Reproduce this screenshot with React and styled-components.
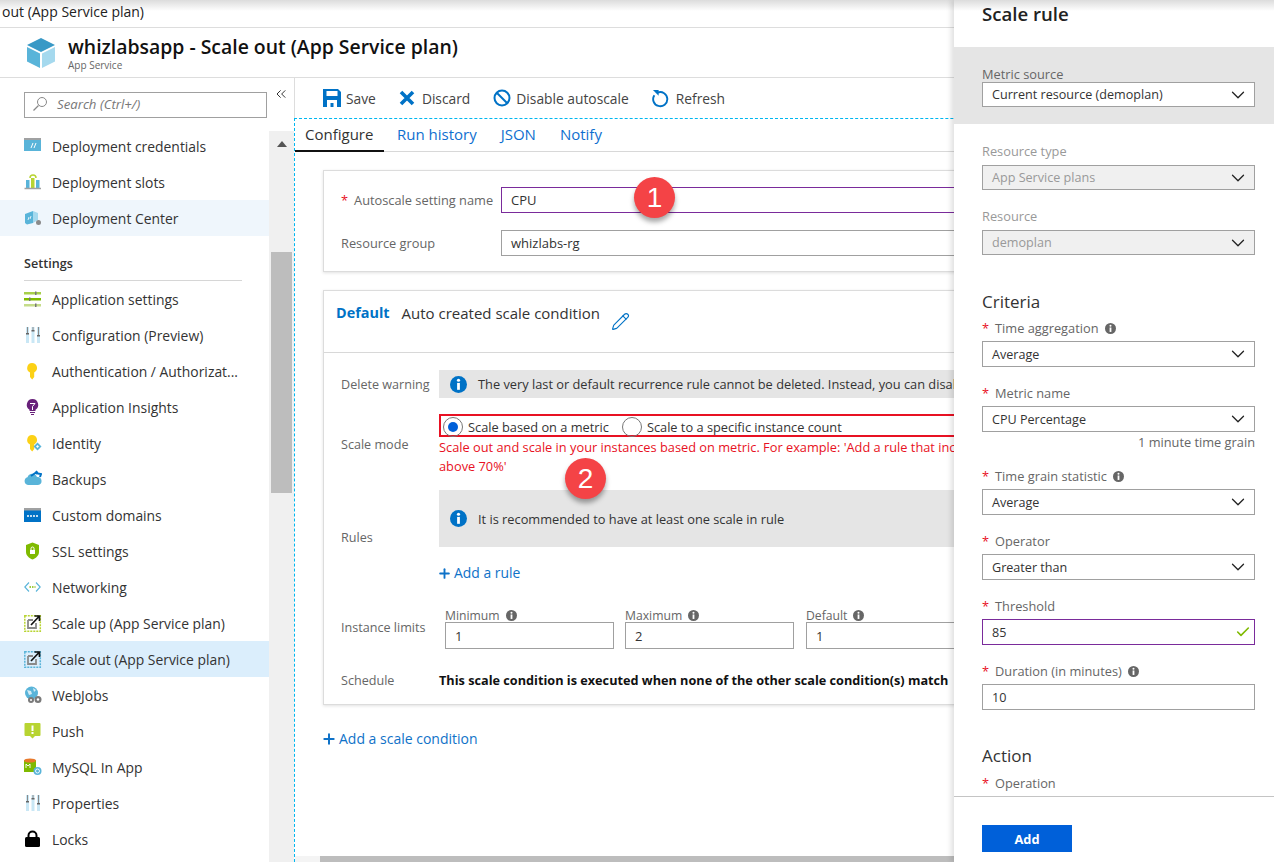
import React from "react";
import styled, { createGlobalStyle } from "styled-components";
import { ChevronDown, ChevronsLeft, Pencil, Plus, Check } from "lucide-react";

const GlobalStyle = createGlobalStyle`
    html, body {
        margin: 0;
        padding: 0;
        overflow: hidden;
        background: #fff;
    }
    * {
        box-sizing: border-box;
    }
`

const Page = styled.div`
    position: relative;
    width: 1274px;
    height: 862px;
    overflow: hidden;
    display: flex;
    flex-direction: column;
    font-family: "Open Sans", "Noto Sans", sans-serif;
    color: #333;
    background: #fff;
`

const Breadcrumb = styled.div`
    height: 28px;
    flex: none;
    padding-left: 2px;
    font-size: 14px;
    line-height: 23px;
    color: #222;
    border-bottom: 1px solid #ddd;
    background: linear-gradient(#dcdcdc 0, #fff 11px);
`

const Header = styled.header`
    height: 50px;
    flex: none;
    display: flex;
    align-items: center;
    gap: 12px;
    padding-left: 26px;
    border-bottom: 1px solid #ddd;
`

const HeaderText = styled.div`
    display: flex;
    flex-direction: column;
`

const Title = styled.h1`
    margin: -1px 0 0;
    font-size: 19.4px;
    line-height: 25px;
    font-weight: 600;
    color: #111;
    white-space: nowrap;
`

const Subtitle = styled.span`
    font-size: 10px;
    line-height: 12px;
    color: #666;
`

const Body = styled.div`
    flex: 1;
    display: flex;
    min-height: 0;
`

const Sidebar = styled.aside`
    width: 294px;
    flex: none;
    display: flex;
    flex-direction: column;
`

const SearchRow = styled.div`
    height: 50px;
    flex: none;
    display: flex;
    align-items: flex-start;
    padding: 14px 0 0 24px;
    gap: 6px;
`

const SearchBox = styled.div`
    width: 243px;
    height: 26px;
    display: flex;
    align-items: center;
    gap: 9px;
    padding: 0 0 2px 7px;
    border: 1px solid #a0a0a0;
    font-size: 13.2px;
    font-style: italic;
    color: #777;
`

const Collapse = styled.span`
    display: flex;
    color: #333;
    margin-top: -6px;
`

const SideBody = styled.div`
    flex: 1;
    display: flex;
    min-height: 0;
`

const NavColumn = styled.nav`
    width: 269px;
    flex: none;
    overflow: hidden;
`

const NavItem = styled.div`
    height: 36px;
    display: flex;
    align-items: center;
    gap: 10px;
    padding-left: 24px;
    font-size: 13.9px;
    color: #333;
    white-space: nowrap;
    background: ${(props) => props.$bg || "transparent"};
`

const NavHeading = styled.div`
    height: 45px;
    margin: 0 27px 0 24px;
    padding-top: 18px;
    font-size: 12.6px;
    font-weight: 600;
    line-height: 20px;
    color: #333;
    border-bottom: 1px solid #d6d6d6;
`

const Track = styled.div`
    width: 25px;
    flex: none;
    margin-top: 3px;
    background: #f0f0f0;
    display: flex;
    flex-direction: column;
    align-items: center;
`

const TrackArrow = styled.div`
    margin-top: 10px;
    width: 0;
    height: 0;
    border-left: 5.5px solid transparent;
    border-right: 5.5px solid transparent;
    border-bottom: 6px solid #555;
`

const TrackThumb = styled.div`
    margin-top: 105px;
    width: 21px;
    height: 241px;
    background: #bdbdbd;
`

const Main = styled.main`
    flex: 1;
    min-width: 0;
    display: flex;
    flex-direction: column;
`

const Toolbar = styled.div`
    height: 40px;
    flex: none;
    display: flex;
    align-items: center;
    padding-left: 28px;
    gap: 23px;
    border-left: 1px solid #ddd;
    font-size: 13.8px;
    color: #444;
`

const ToolButton = styled.span`
    display: flex;
    align-items: center;
    gap: ${(props) => props.$gap || 5}px;
    white-space: nowrap;
`

const Workspace = styled.div`
    flex: 1;
    min-height: 0;
    display: flex;
    flex-direction: column;
    border-left: 1px dashed #00b7f0;
    border-top: 1px dashed #00b7f0;
`

const Tabs = styled.div`
    height: 33px;
    flex: none;
    display: flex;
    border-bottom: 1px solid #d8d8d8;
    font-size: 15px;
`

const Tab = styled.span`
    height: 33px;
    padding: 5px ${(props) => props.$pad || 12}px 0;
    margin-right: ${(props) => (props.$active ? 1 : 0)}px;
    color: ${(props) => (props.$active ? "#333" : "#0f6fd0")};
    border-bottom: 2px solid ${(props) => (props.$active ? "#111" : "transparent")};
    width: ${(props) => props.$width}px;
    white-space: nowrap;
`

const Content = styled.div`
    flex: 1;
    min-height: 0;
    overflow: hidden;
    padding: 18px 0 0 28px;
`

const Card = styled.section`
    width: 1000px;
    margin-bottom: 18px;
    background: #fff;
    border: 1px solid #dcdcdc;
    box-shadow: 0 1px 3px rgba(0, 0, 0, 0.12);
`

const NameBlock = styled.div`
    padding: 16px 0 15px 17px;
    display: flex;
    flex-direction: column;
    gap: 17px;
`

const NameRow = styled.div`
    display: flex;
    align-items: center;
`

const NameLabel = styled.label`
    width: 160px;
    flex: none;
    font-size: 12.8px;
    color: #666;
    white-space: nowrap;
`

const Star = styled.span`
    color: #e81123;
    margin-right: ${(props) => props.$gap || 6}px;
`

const Input = styled.div`
    width: ${(props) => props.$width || "100%"};
    height: ${(props) => props.$height || 26}px;
    display: flex;
    align-items: center;
    justify-content: space-between;
    padding: 0 ${(props) => props.$right || 5}px 0 9px;
    border: 1px solid ${(props) => props.$border || "#a0a0a0"};
    background: ${(props) => props.$bg || "#fff"};
    color: ${(props) => props.$color || "#333"};
    font-size: 13px;
    white-space: nowrap;
`

const PanelInput = styled(Input)`
    font-size: 12.6px;
`

const CardHead = styled.div`
    height: 62px;
    display: flex;
    align-items: flex-start;
    padding: 11px 0 0 12px;
    border-bottom: 1px solid #d8d8d8;
    font-size: 15px;
    line-height: 22px;
`

const DefaultTag = styled.strong`
    color: #0072c6;
    font-size: 14.4px;
    font-weight: 700;
    margin-right: 12px;
`

const CondName = styled.span`
    color: #333;
    margin-right: 11px;
`

const PencilWrap = styled.span`
    display: flex;
    color: #0072c6;
    margin-top: 10px;
`

const CardBody = styled.div`
    padding: 17px 0 15px 17px;
`

const FormRow = styled.div`
    display: flex;
    align-items: center;
    margin-top: ${(props) => props.$top || 0}px;
`

const RowLabel = styled.span`
    width: 98px;
    flex: none;
    margin-bottom: ${(props) => props.$lift || 0}px;
    font-size: 12.6px;
    color: #666;
    white-space: nowrap;
`

const RowMain = styled.div`
    flex: 1;
    min-width: 0;
`

const Notice = styled.div`
    height: ${(props) => props.$height}px;
    display: flex;
    align-items: center;
    gap: 11px;
    padding-left: 11px;
    background: #e5e5e5;
    font-size: 12.8px;
    color: #333;
    white-space: nowrap;
`

const ModeBox = styled.div`
    height: 23px;
    display: flex;
    align-items: center;
    padding: 2px 0 0 2px;
    border: 2px solid #e81123;
    font-size: 12.8px;
    color: #333;
    white-space: nowrap;
`

const Radio = styled.span`
    width: 20px;
    height: 20px;
    flex: none;
    border-radius: 50%;
    border: 1px solid #777;
    display: flex;
    align-items: center;
    justify-content: center;
    margin-left: ${(props) => props.$left || 0}px;
    margin-right: 5px;
    &::after {
        content: "";
        width: 10px;
        height: 10px;
        border-radius: 50%;
        background: ${(props) => (props.$on ? "#0060d9" : "transparent")};
    }
`

const ModeHelp = styled.p`
    margin: 0;
    padding-top: 1px;
    font-size: 12.8px;
    line-height: 18.5px;
    color: #e81123;
    white-space: nowrap;
`

const AddLink = styled.div`
    display: flex;
    align-items: center;
    gap: 2px;
    margin-top: ${(props) => props.$top || 0}px;
    font-size: ${(props) => props.$size || 13.9}px;
    line-height: 22px;
    color: #0f72c8;
    white-space: nowrap;
    svg {
        margin-left: -2px;
    }
`

const Limits = styled.div`
    display: grid;
    grid-template-columns: 180px 181px 169px;
    padding-left: 6px;
`

const LimitLabel = styled.div`
    height: 14px;
    display: flex;
    align-items: center;
    gap: 6px;
    font-size: 12.2px;
    color: #666;
`

const ScheduleText = styled.strong`
    font-size: 12.7px;
    font-weight: 700;
    color: #111;
    white-space: nowrap;
`

const HScroll = styled.div`
    height: 6px;
    flex: none;
    padding-left: 25px;
    background: #f4f4f4;
`

const HThumb = styled.div`
    height: 100%;
    background: #bdbdbd;
`

const Badge = styled.div`
    position: absolute;
    left: ${(props) => props.$x}px;
    top: ${(props) => props.$y}px;
    width: 41px;
    height: 41px;
    border-radius: 50%;
    background: #f44346;
    color: #fff;
    display: flex;
    align-items: center;
    justify-content: center;
    font-family: "Liberation Sans", Arial, sans-serif;
    font-size: 28px;
    box-shadow: 0 4px 5px rgba(0, 0, 0, 0.35);
`

const Panel = styled.aside`
    position: absolute;
    right: 0;
    top: 0;
    bottom: 0;
    width: 320px;
    display: flex;
    flex-direction: column;
    background: linear-gradient(#dcdcdc 0, #fff 11px);
    box-shadow: -3px 0 5px rgba(0, 0, 0, 0.12);
`

const PanelTitle = styled.h2`
    height: 47px;
    flex: none;
    margin: 0;
    padding-left: 28px;
    font-size: 18.6px;
    line-height: 28px;
    font-weight: 600;
    color: #222;
`

const SourceBand = styled.div`
    flex: none;
    height: 77px;
    padding: 19px 19px 0 28px;
    background: #e5e5e5;
`

const PanelScroll = styled.div`
    flex: 1;
    min-height: 0;
    overflow: hidden;
    padding: 18px 19px 0 28px;
`

const Field = styled.div`
    margin-bottom: ${(props) => props.$after ?? 17}px;
`

const FieldLabel = styled.div`
    height: ${(props) => props.$height || 18}px;
    margin-bottom: ${(props) => props.$gap ?? 4}px;
    display: flex;
    align-items: center;
    font-size: 12.8px;
    color: ${(props) => props.$color || "#666"};
    white-space: nowrap;
`

const InfoSlot = styled.span`
    display: flex;
    margin-left: 6px;
`

const Hint = styled.div`
    height: 17px;
    margin-top: 1px;
    text-align: right;
    font-size: 12.8px;
    line-height: 18px;
    color: #666;
`

const SectionTitle = styled.h3`
    margin: ${(props) => props.$top}px 0 ${(props) => props.$bottom}px;
    font-size: 17px;
    line-height: 24px;
    font-weight: 400;
    color: #333;
`

const PanelFooter = styled.div`
    height: 66px;
    flex: none;
    padding: 28px 0 0 28px;
    border-top: 1px solid #c4c4c4;
    background: #fff;
`

const AddButton = styled.button`
    width: 90px;
    height: 27px;
    border: 0;
    padding: 0;
    background: #0060d9;
    color: #fff;
    font-family: inherit;
    font-size: 12.8px;
    font-weight: 700;
`

const IconSvg = styled.svg`
    width: 18px;
    height: 18px;
    flex: none;
    display: block;
`

const Sliders = () => (
    <IconSvg viewBox="0 0 18 18">
        <rect x="2" y="1" width="3" height="16" fill="#c9e7f5" />
        <rect x="7.500" y="1" width="3" height="16" fill="#c9e7f5" />
        <rect x="13" y="1" width="3" height="16" fill="#c9e7f5" />
        <path d="M3.500 1v7M9 1v3M14.500 1v9" stroke="#8a8a8a" strokeWidth="1" />
        <rect x="2" y="7" width="3" height="1.500" fill="#666" />
        <rect x="7.500" y="4" width="3" height="1.500" fill="#666" />
        <rect x="13" y="9" width="3" height="1.500" fill="#666" />
    </IconSvg>
)

const KeyShape = ({ fill }) => (
    <path
        d="M8 1a5 5 0 0 1 2.200 9.500V15l-2 2.400L6 15v-4.500A5 5 0 0 1 8 1z"
        fill={fill}
    />
)

const ScaleIcon = ({ color }) => (
    <IconSvg viewBox="0 0 18 18">
        <rect x="0.800" y="1.800" width="15.500" height="15.500" fill="none" stroke={color} strokeWidth="1.500" strokeDasharray="2 1" />
        <path d="M4 6h5M4 6v8h8v-5" fill="none" stroke="#8a8a8a" strokeWidth="1.800" />
        <path d="M7 11L15 2.500M10.500 2h5v5" fill="none" stroke="#111" strokeWidth="1.700" />
    </IconSvg>
)

const navIcons = {
    credentials: (
        <IconSvg viewBox="0 0 18 18">
            <rect x="0" y="1" width="17" height="13" fill="#59b4d9" />
            <rect x="0" y="1" width="17" height="2" fill="#a0a1a2" />
            <path d="M7 11l2-5M10 11l2-5" stroke="#fff" strokeWidth="1" />
        </IconSvg>
    ),
    slots: (
        <IconSvg viewBox="0 0 18 18">
            <path d="M6 5a3 3 0 0 1 6 0" fill="none" stroke="#b8d432" strokeWidth="1.500" />
            <rect x="2" y="7" width="3.500" height="8" fill="#59b4d9" />
            <rect x="7" y="5" width="3.500" height="10" fill="#b8d432" />
            <rect x="12" y="7" width="3.500" height="8" fill="#59b4d9" />
            <path d="M0.500 15.500h16.500" stroke="#a0a1a2" strokeWidth="1.500" />
        </IconSvg>
    ),
    center: (
        <IconSvg viewBox="0 0 18 18">
            <path d="M1 5l8-3v12l-6 1.500-2-1.500z" fill="#59b4d9" />
            <path d="M9 2l5 2v7l-5 3z" fill="#a5d9ee" />
            <path d="M5 8l-1 3M7 7l-1 3" stroke="#fff" strokeWidth="0.800" />
            <circle cx="14.500" cy="13.500" r="2.500" fill="#8a8a8a" />
        </IconSvg>
    ),
    appSettings: (
        <IconSvg viewBox="0 0 18 18">
            <rect x="0" y="2" width="17" height="2.500" fill="#a7cf4b" />
            <rect x="0" y="8" width="17" height="2.500" fill="#7fba00" />
            <rect x="0" y="14" width="17" height="2.500" fill="#c5dc8a" />
            <rect x="11" y="1.500" width="1.500" height="3.500" fill="#777" />
            <rect x="5" y="7.500" width="1.500" height="3.500" fill="#777" />
            <rect x="11" y="13.500" width="1.500" height="3.500" fill="#777" />
        </IconSvg>
    ),
    config: <Sliders />,
    auth: (
        <IconSvg viewBox="0 0 18 18">
            <KeyShape fill="#fcd116" />
        </IconSvg>
    ),
    insights: (
        <IconSvg viewBox="0 0 18 18">
            <path d="M8.500 1a5.800 5.800 0 0 1 3 10.700V13h-6v-1.300A5.800 5.800 0 0 1 8.500 1z" fill="#68217a" />
            <path d="M6 5.500h5L8.500 8.500V12" fill="none" stroke="#fff" strokeWidth="1" />
            <path d="M6 14.500h5M7 16.500h3" stroke="#68217a" strokeWidth="1.200" />
        </IconSvg>
    ),
    identity: (
        <IconSvg viewBox="0 0 18 18">
            <KeyShape fill="#fcd116" />
            <path d="M13.500 8.500l4 4-4 4-4-4z" fill="#59b4d9" />
            <path d="M13.500 11l1.500 1.500-1.500 1.500-1.500-1.500z" fill="#fff" />
        </IconSvg>
    ),
    backups: (
        <IconSvg viewBox="0 0 18 18">
            <path d="M4 15a4 4 0 0 1-.500-7.800A5 5 0 0 1 13 7a4 4 0 0 1 1 8z" fill="#59b4d9" />
            <path d="M7 6l5-3.500 1.500 1.500M12 1l2 2.500 3 0.500-1 3" fill="none" stroke="#0072c6" strokeWidth="2" />
        </IconSvg>
    ),
    domains: (
        <IconSvg viewBox="0 0 18 18">
            <rect x="0" y="2" width="17" height="14" fill="#0072c6" />
            <rect x="0" y="2" width="17" height="2.500" fill="#a0a1a2" />
            <path d="M3 10h11" stroke="#fff" strokeWidth="1.500" strokeDasharray="2 1" />
        </IconSvg>
    ),
    ssl: (
        <IconSvg viewBox="0 0 18 18">
            <path d="M8.500 0.500l6.500 2.500v7c0 3.500-3 6-6.500 7.500C5 16 2 13.500 2 10V3z" fill="#7fba00" />
            <rect x="6" y="8" width="5" height="4" fill="#fff" />
            <path d="M7 8V6.500a1.500 1.500 0 0 1 3 0V8" fill="none" stroke="#fff" strokeWidth="1" />
        </IconSvg>
    ),
    networking: (
        <IconSvg viewBox="0 0 18 18">
            <path d="M5 4.500L0.800 9 5 13.500M12 4.500L16.200 9 12 13.500" fill="none" stroke="#59b4d9" strokeWidth="1.100" />
            <path d="M5.500 9h6" stroke="#7fba00" strokeWidth="1.500" strokeDasharray="1.500 1" />
        </IconSvg>
    ),
    scaleUp: <ScaleIcon color="#b8d432" />,
    scaleOut: <ScaleIcon color="#59b4d9" />,
    webjobs: (
        <IconSvg viewBox="0 0 18 18">
            <circle cx="7.500" cy="7" r="6.500" fill="#59b4d9" />
            <path d="M3 4l4 1 1 3-3 1zM9 2l3 2-2 2z" fill="#fff" opacity="0.750" />
            <circle cx="7" cy="14" r="3" fill="#7a7a7a" />
            <circle cx="14" cy="13.500" r="3.500" fill="#7a7a7a" />
            <circle cx="7" cy="14" r="1" fill="#fff" />
            <circle cx="14" cy="13.500" r="1.200" fill="#fff" />
        </IconSvg>
    ),
    push: (
        <IconSvg viewBox="0 0 18 18">
            <path d="M1.500 1h14a1 1 0 0 1 1 1v11a1 1 0 0 1-1 1H11l-2.500 2.500L6 14H1.500a1 1 0 0 1-1-1V2a1 1 0 0 1 1-1z" fill="#b8d432" />
            <path d="M8.500 3.500v5.500" stroke="#fff" strokeWidth="2" />
            <rect x="7.500" y="10" width="2" height="2" fill="#fff" />
        </IconSvg>
    ),
    mysql: (
        <IconSvg viewBox="0 0 18 18">
            <rect x="0" y="2" width="12" height="12" fill="#7fba00" />
            <ellipse cx="6" cy="2.500" rx="6" ry="2" fill="#e8792b" />
            <path d="M2 10V6l2 2 2-2v4" fill="none" stroke="#fff" strokeWidth="0.900" />
            <circle cx="13.500" cy="13" r="4" fill="#59b4d9" />
            <circle cx="13.500" cy="13" r="2" fill="none" stroke="#fff" strokeWidth="0.900" />
        </IconSvg>
    ),
    properties: <Sliders />,
    locks: (
        <IconSvg viewBox="0 0 18 18">
            <path d="M4.500 8V5.500a4 4 0 0 1 8 0V8" fill="none" stroke="#000" strokeWidth="2" />
            <rect x="1" y="7" width="15" height="10" rx="1.500" fill="#000" />
        </IconSvg>
    ),
}

const topNav = [
    { icon: "credentials", label: "Deployment credentials" },
    { icon: "slots", label: "Deployment slots" },
    { icon: "center", label: "Deployment Center", bg: "#eff6fc" },
]

const settingsNav = [
    { icon: "appSettings", label: "Application settings" },
    { icon: "config", label: "Configuration (Preview)" },
    { icon: "auth", label: "Authentication / Authorizat..." },
    { icon: "insights", label: "Application Insights" },
    { icon: "identity", label: "Identity" },
    { icon: "backups", label: "Backups" },
    { icon: "domains", label: "Custom domains" },
    { icon: "ssl", label: "SSL settings" },
    { icon: "networking", label: "Networking" },
    { icon: "scaleUp", label: "Scale up (App Service plan)" },
    { icon: "scaleOut", label: "Scale out (App Service plan)", bg: "#dbeefc" },
    { icon: "webjobs", label: "WebJobs" },
    { icon: "push", label: "Push" },
    { icon: "mysql", label: "MySQL In App" },
    { icon: "properties", label: "Properties" },
    { icon: "locks", label: "Locks" },
]

const Info = ({ size = 11, color = "#666" }) => (
    <svg width={size} height={size} viewBox="0 0 16 16" style={{ display: "block", flex: "none" }}>
        <circle cx="8" cy="8" r="8" fill={color} />
        <circle cx="8" cy="4" r="1.500" fill="#fff" />
        <rect x="6.700" y="6.500" width="2.600" height="6.500" fill="#fff" />
    </svg>
)

const CubeLogo = () => (
    <svg width="30" height="32" viewBox="0 0 30 32" style={{ display: "block", flex: "none" }}>
        <path d="M15 1l14 7-14 7L1 8z" fill="#3999c6" />
        <path d="M1 10l13 6.500V31L1 24.500z" fill="#59b4d9" />
        <path d="M29 10l-13 6.500V31l13-6.500z" fill="#a5d9ee" />
    </svg>
)

const SearchGlyph = () => (
    <svg width="16" height="16" viewBox="0 0 16 16" style={{ display: "block", flex: "none" }}>
        <circle cx="10" cy="6" r="4.500" fill="none" stroke="#888" strokeWidth="1" />
        <path d="M6.500 9.500L1.500 14.500" stroke="#888" strokeWidth="1.300" />
    </svg>
)

const SaveGlyph = () => (
    <svg width="18" height="18" viewBox="0 0 18 18" style={{ display: "block" }}>
        <path d="M0 0h15l3 3v15H0z" fill="#0072c6" />
        <rect x="3.500" y="2" width="11" height="5" fill="#fff" />
        <rect x="4" y="11" width="10" height="7" fill="#fff" />
        <rect x="7.500" y="14" width="3" height="4" fill="#0072c6" />
    </svg>
)

const DiscardGlyph = () => (
    <svg width="16" height="16" viewBox="0 0 16 16" style={{ display: "block" }}>
        <path d="M2 2l12 12M14 2L2 14" stroke="#0072c6" strokeWidth="3.600" />
    </svg>
)

const DisableGlyph = () => (
    <svg width="18" height="18" viewBox="0 0 18 18" style={{ display: "block" }}>
        <circle cx="9" cy="9" r="7.500" fill="none" stroke="#0072c6" strokeWidth="2" />
        <path d="M4 4l10 10" stroke="#0072c6" strokeWidth="2" />
    </svg>
)

const RefreshGlyph = () => (
    <svg width="17" height="20" viewBox="0 0 18 20" style={{ display: "block" }}>
        <path d="M6 4.200A7.500 7.500 0 1 1 2.500 7" fill="none" stroke="#0072c6" strokeWidth="2" />
        <path d="M1 1.500h6v6z" fill="#0072c6" />
    </svg>
)

const Required = ({ children, info }) => (
    <FieldLabel>
        <Star $gap={6}>*</Star>
        {children}
        {info && (
            <InfoSlot>
                <Info />
            </InfoSlot>
        )}
    </FieldLabel>
)

const Select = ({ value, disabled, height }) => (
    <PanelInput
        $height={height}
        $bg={disabled ? "#f0f0f0" : "#fff"}
        $color={disabled ? "#999" : "#333"}
    >
        {value}
        <ChevronDown size={22} strokeWidth={1.4} color="#222" />
    </PanelInput>
)

const NavList = ({ items }) =>
    items.map((item) => (
        <NavItem key={item.label} $bg={item.bg}>
            {navIcons[item.icon]}
            {item.label}
        </NavItem>
    ))

const App = () => {
    return (
        <Page>
            <GlobalStyle />
            <Breadcrumb>out (App Service plan)</Breadcrumb>
            <Header>
                <CubeLogo />
                <HeaderText>
                    <Title>whizlabsapp - Scale out (App Service plan)</Title>
                    <Subtitle>App Service</Subtitle>
                </HeaderText>
            </Header>
            <Body>
                <Sidebar>
                    <SearchRow>
                        <SearchBox>
                            <SearchGlyph />
                            Search (Ctrl+/)
                        </SearchBox>
                        <Collapse>
                            <ChevronsLeft size={16} strokeWidth={1.5} />
                        </Collapse>
                    </SearchRow>
                    <SideBody>
                        <NavColumn>
                            <NavList items={topNav} />
                            <NavHeading>Settings</NavHeading>
                            <NavList items={settingsNav} />
                        </NavColumn>
                        <Track>
                            <TrackArrow />
                            <TrackThumb />
                        </Track>
                    </SideBody>
                </Sidebar>
                <Main>
                    <Toolbar>
                        <ToolButton><SaveGlyph />Save</ToolButton>
                        <ToolButton $gap={7}><DiscardGlyph />Discard</ToolButton>
                        <ToolButton><DisableGlyph />Disable autoscale</ToolButton>
                        <ToolButton $gap={7}><RefreshGlyph />Refresh</ToolButton>
                    </Toolbar>
                    <Workspace>
                        <Tabs>
                            <Tab $active $pad={10} $width={89}>Configure</Tab>
                            <Tab>Run history</Tab>
                            <Tab>JSON</Tab>
                            <Tab>Notify</Tab>
                        </Tabs>
                        <Content>
                            <Card>
                                <NameBlock>
                                    <NameRow>
                                        <NameLabel><Star>*</Star>Autoscale setting name</NameLabel>
                                        <Input $border="#7a2b9b">CPU</Input>
                                    </NameRow>
                                    <NameRow>
                                        <NameLabel>Resource group</NameLabel>
                                        <Input>whizlabs-rg</Input>
                                    </NameRow>
                                </NameBlock>
                            </Card>
                            <Card>
                                <CardHead>
                                    <DefaultTag>Default</DefaultTag>
                                    <CondName>Auto created scale condition</CondName>
                                    <PencilWrap><Pencil size={19} strokeWidth={1.4} /></PencilWrap>
                                </CardHead>
                                <CardBody>
                                    <FormRow>
                                        <RowLabel>Delete warning</RowLabel>
                                        <RowMain>
                                            <Notice $height={28}>
                                                <Info size={17} color="#0072c6" />
                                                The very last or default recurrence rule cannot be deleted. Instead, you can disable autoscale
                                            </Notice>
                                        </RowMain>
                                    </FormRow>
                                    <FormRow $top={16}>
                                        <RowLabel>Scale mode</RowLabel>
                                        <RowMain>
                                            <ModeBox>
                                                <Radio $on />
                                                Scale based on a metric
                                                <Radio $left={13} />
                                                Scale to a specific instance count
                                            </ModeBox>
                                            <ModeHelp>
                                                Scale out and scale in your instances based on metric. For example: 'Add a rule that increases instance count by 1 when CPU percentage is
                                                <br />
                                                above 70%'
                                            </ModeHelp>
                                        </RowMain>
                                    </FormRow>
                                    <FormRow $top={15}>
                                        <RowLabel>Rules</RowLabel>
                                        <RowMain>
                                            <Notice $height={57}>
                                                <Info size={17} color="#0072c6" />
                                                It is recommended to have at least one scale in rule
                                            </Notice>
                                            <AddLink $top={15}><Plus size={15} strokeWidth={3} />Add a rule</AddLink>
                                        </RowMain>
                                    </FormRow>
                                    <FormRow $top={24}>
                                        <RowLabel $lift={2}>Instance limits</RowLabel>
                                        <RowMain>
                                            <Limits>
                                                <div>
                                                    <LimitLabel>Minimum <Info /></LimitLabel>
                                                    <Input $width="169px" $height={27}>1</Input>
                                                </div>
                                                <div>
                                                    <LimitLabel>Maximum <Info /></LimitLabel>
                                                    <Input $width="169px" $height={27}>2</Input>
                                                </div>
                                                <div>
                                                    <LimitLabel>Default <Info /></LimitLabel>
                                                    <Input $width="169px" $height={27}>1</Input>
                                                </div>
                                            </Limits>
                                        </RowMain>
                                    </FormRow>
                                    <FormRow $top={22}>
                                        <RowLabel>Schedule</RowLabel>
                                        <ScheduleText>This scale condition is executed when none of the other scale condition(s) match</ScheduleText>
                                    </FormRow>
                                </CardBody>
                            </Card>
                            <AddLink $top={23} $size={14}><Plus size={16} strokeWidth={3} />Add a scale condition</AddLink>
                        </Content>
                        <HScroll><HThumb /></HScroll>
                    </Workspace>
                </Main>
            </Body>

            <Badge $x={634} $y={177}>1</Badge>
            <Badge $x={565} $y={458}>2</Badge>

            <Panel>
                <PanelTitle>Scale rule</PanelTitle>
                <SourceBand>
                    <FieldLabel $height={16} $gap={0}>Metric source</FieldLabel>
                    <Select value="Current resource (demoplan)" height={25} />
                </SourceBand>
                <PanelScroll>
                    <Field>
                        <FieldLabel $color="#999" $gap={5}>Resource type</FieldLabel>
                        <Select value="App Service plans" disabled height={25} />
                    </Field>
                    <Field>
                        <FieldLabel $color="#999" $gap={5}>Resource</FieldLabel>
                        <Select value="demoplan" disabled height={25} />
                    </Field>
                    <SectionTitle $top={35} $bottom={5}>Criteria</SectionTitle>
                    <Field>
                        <Required info>Time aggregation</Required>
                        <Select value="Average" />
                    </Field>
                    <Field>
                        <Required>Metric name</Required>
                        <Select value="CPU Percentage" />
                        <Hint>1 minute time grain</Hint>
                    </Field>
                    <Field>
                        <Required info>Time grain statistic</Required>
                        <Select value="Average" />
                    </Field>
                    <Field>
                        <Required>Operator</Required>
                        <Select value="Greater than" />
                    </Field>
                    <Field>
                        <Required>Threshold</Required>
                        <PanelInput $border="#7a2b9b" $right={3}>
                            85
                            <Check size={16} strokeWidth={2.4} color="#7fba00" />
                        </PanelInput>
                    </Field>
                    <Field $after={34}>
                        <Required info>Duration (in minutes)</Required>
                        <PanelInput>10</PanelInput>
                    </Field>
                    <SectionTitle $top={0} $bottom={6}>Action</SectionTitle>
                    <Required>Operation</Required>
                </PanelScroll>
                <PanelFooter>
                    <AddButton>Add</AddButton>
                </PanelFooter>
            </Panel>
        </Page>
    )
}

export default App
